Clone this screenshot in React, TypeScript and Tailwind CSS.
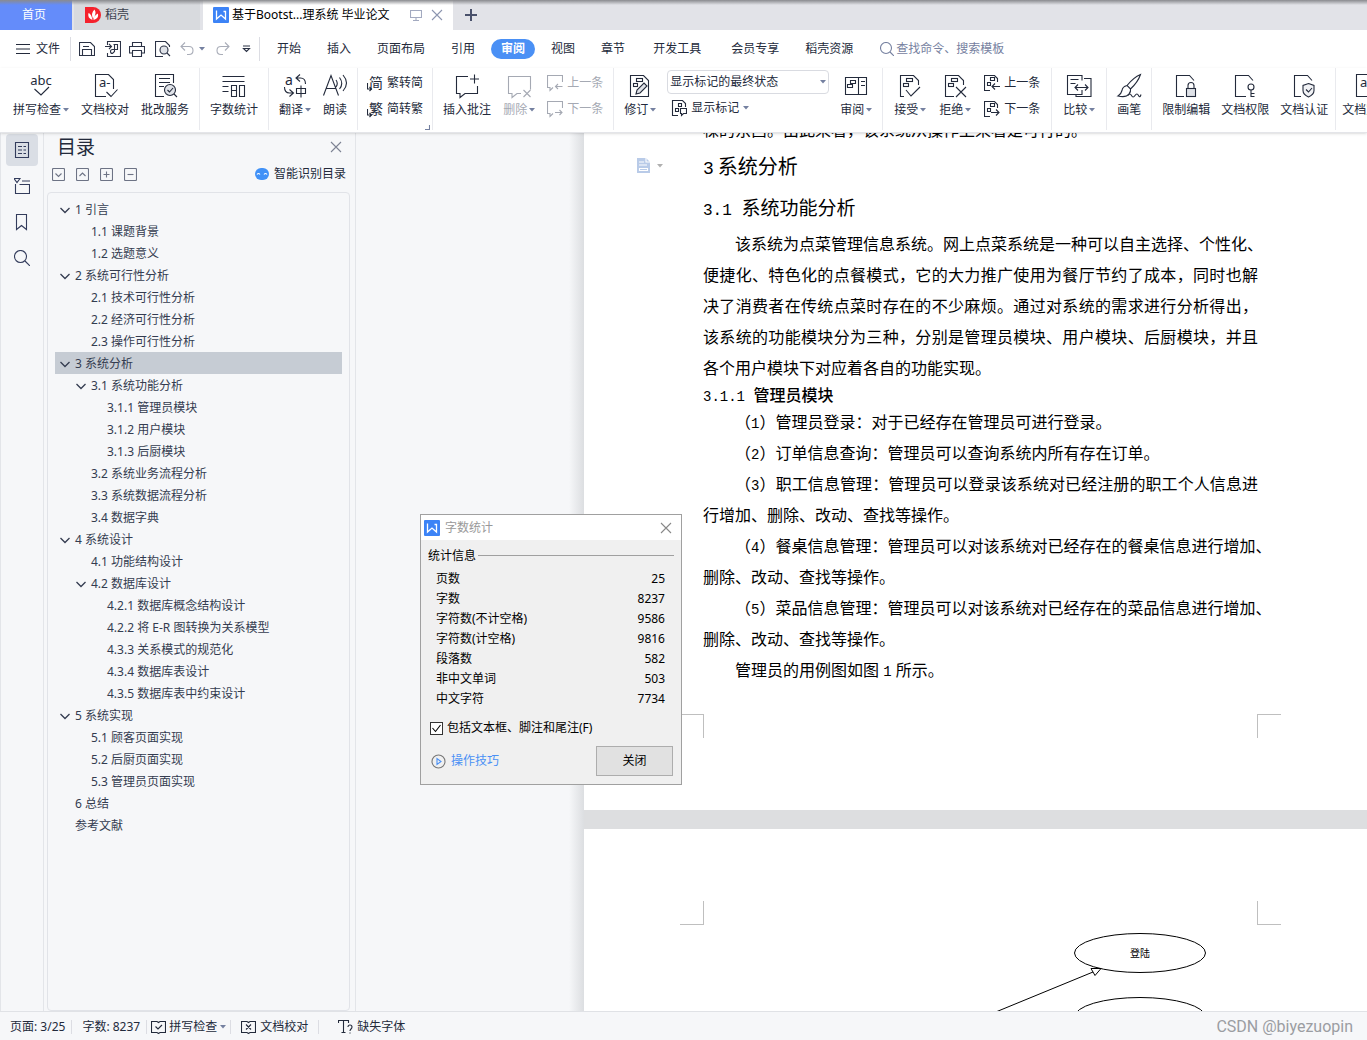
import type { ReactNode } from 'react'

type TocItem = { level: number; text: string; open?: boolean; active?: boolean }

const toc: TocItem[] = [
  { level: 0, text: '1 引言', open: true },
  { level: 1, text: '1.1 课题背景' },
  { level: 1, text: '1.2 选题意义' },
  { level: 0, text: '2 系统可行性分析', open: true },
  { level: 1, text: '2.1 技术可行性分析' },
  { level: 1, text: '2.2 经济可行性分析' },
  { level: 1, text: '2.3 操作可行性分析' },
  { level: 0, text: '3 系统分析', open: true, active: true },
  { level: 1, text: '3.1 系统功能分析', open: true },
  { level: 2, text: '3.1.1 管理员模块' },
  { level: 2, text: '3.1.2 用户模块' },
  { level: 2, text: '3.1.3 后厨模块' },
  { level: 1, text: '3.2 系统业务流程分析' },
  { level: 1, text: '3.3 系统数据流程分析' },
  { level: 1, text: '3.4 数据字典' },
  { level: 0, text: '4 系统设计', open: true },
  { level: 1, text: '4.1 功能结构设计' },
  { level: 1, text: '4.2 数据库设计', open: true },
  { level: 2, text: '4.2.1 数据库概念结构设计' },
  { level: 2, text: '4.2.2 将 E-R 图转换为关系模型' },
  { level: 2, text: '4.3.3 关系模式的规范化' },
  { level: 2, text: '4.3.4 数据库表设计' },
  { level: 2, text: '4.3.5 数据库表中约束设计' },
  { level: 0, text: '5 系统实现', open: true },
  { level: 1, text: '5.1 顾客页面实现' },
  { level: 1, text: '5.2 后厨页面实现' },
  { level: 1, text: '5.3 管理员页面实现' },
  { level: 0, text: '6 总结' },
  { level: 0, text: '参考文献' },
]

const tocIndent = ['pl-1', 'pl-5', 'pl-9']

const stats = [
  ['页数', '25'],
  ['字数', '8237'],
  ['字符数(不计空格)', '9586'],
  ['字符数(计空格)', '9816'],
  ['段落数', '582'],
  ['非中文单词', '503'],
  ['中文字符', '7734'],
]

function Svg({ w, h, children, className = '' }: { w: number; h: number; children: ReactNode; className?: string }) {
  return (
    <svg
      width={w}
      height={h}
      viewBox={`0 0 ${w} ${h}`}
      fill="none"
      stroke="currentColor"
      strokeWidth="1.1"
      className={`shrink-0 ${className}`}
      aria-hidden="true"
    >
      {children}
    </svg>
  )
}

function Caret({ className = 'text-[#7480a0]' }: { className?: string }) {
  return (
    <Svg w={6} h={4} className={className}>
      <path d="M0 0h6L3 3.5z" fill="currentColor" stroke="none" />
    </Svg>
  )
}

function CloseIcon({ className = '' }: { className?: string }) {
  return (
    <Svg w={12} h={12} className={className}>
      <path d="M1 1l10 10M11 1L1 11" />
    </Svg>
  )
}

function WpsLogo() {
  return (
    <Svg w={16} h={16}>
      <rect width="16" height="16" rx="1" fill="#3c83f6" stroke="none" />
      <path d="M3.5 3.5v8.5l4.5-4 4.5 4V4.5h-2" stroke="#fff" strokeWidth="1.3" />
    </Svg>
  )
}

/* small blocks drawn inside the revision icons */
function Blocks() {
  return (
    <>
      <rect x="10.5" y="6.5" width="6" height="3" />
      <rect x="7.5" y="11.5" width="5" height="3" />
    </>
  )
}

const icons = {
  spell: (
    <>
      <text x="14" y="13" textAnchor="middle" fontSize="13" fill="currentColor" stroke="none">abc</text>
      <path d="M7.5 17l6.500 6 8-8" />
    </>
  ),
  proof: (
    <>
      <path d="M15 24.5H4.5v-22h13l5 5V17" />
      <text x="8" y="15" fontSize="13" fill="currentColor" stroke="none">a-</text>
      <path d="M15.5 20l4.500 4.500 6.500-7" />
    </>
  ),
  service: (
    <>
      <path d="M13 24.5H4.5v-22h18V11M8 6.5h11M8 10.5h11M8 14.5h5" />
      <circle cx="19" cy="18" r="5.5" fill="#dfe2e8" />
      <path d="M16.5 18l2 2 3.500-4M23 22l3 3" />
    </>
  ),
  count: (
    <path d="M2.5 4.5h22M2.5 9.5h22M2.5 14.5h6M2.5 19.5h6M11.5 13.5h5v11h-5zM11.5 18.5h5M19.5 13.5h5v11h-5z" />
  ),
  translate: (
    <>
      <text x="4" y="13" fontSize="14" fill="currentColor" stroke="none">a</text>
      <path d="M19 2.5l-4 3.500 4 3.500M15 6h4.500q5 0 5 6M3.5 15q0 6 5 6h3.500M8.5 17.5l4 3.500-4 3.500" />
      <path d="M15.5 16.5h9v5h-9zM20 13.5v12" />
    </>
  ),
  read: (
    <path d="M2.5 23.5L10 3.5l7.500 20M5 16.5h10M15 8q2.500 3.500 0 7M18.5 5.5q4.500 6 0 11.500M22 3q7 8 0 16" />
  ),
  comment: <path d="M15 4.5H3.5v17H7v4l5-4h12.500V14M21.5 2.5v9M17 7h9" />,
  removeComment: <path d="M16 21.5h-4l-5 4v-4H3.5v-17h22v13M18.5 18l7 7M25.5 18l-7 7" />,
  revise: (
    <>
      <path d="M4.5 3.5h13l5 5v16h-18z" />
      <rect x="10.5" y="6.5" width="6" height="3" />
      <rect x="7.5" y="11.5" width="4" height="3" />
      <path d="M10 22l1-4 7-7 3 3-7 7z" fill="#dfe2e8" />
    </>
  ),
  review: (
    <>
      <path d="M3.5 5.5h21v17h-21zM16.5 5.5v17M19 9.5h4M19 13.5h4" />
      <path d="M8.5 8.5h5v3h-5zM5.5 12.5h5v3h-5z" />
    </>
  ),
  accept: (
    <>
      <path d="M8 24.5H4.5v-21h13l5 5V13M10 18l5 6 9-9" />
      <Blocks />
    </>
  ),
  reject: (
    <>
      <path d="M13 24.5H4.5v-21h13l5 5V13M15 15l10 10M25 15L15 25" />
      <Blocks />
    </>
  ),
  compare: (
    <path d="M17 8.500v-5H2.5v19h14.500V18M19 6.500h7v18H11v-2M5.5 7.5h8M5.5 11.5h5M10 15.500h13M13 12.500l-3 3 3 3M20 12.500l3 3-3 3" />
  ),
  pen: (
    <>
      <path d="M25.5 2.500q-7 3-13.500 11l3.500 3.500q7.500-7 10-14.500zM12 13.500q-4.500 1-5 5-1 4-4 5.500 8 2 11-2 2-2 1.500-5" />
      <path d="M13 23.5q2-3 3.500 0t3.500 0 3.500 0 2.500-1" />
    </>
  ),
  lock: (
    <>
      <path d="M12 24.5H4.5v-21h13l4.500 5" />
      <path d="M16 16v-2.500q0-3 3-3t3 3V16" />
      <rect x="14.5" y="16.5" width="9" height="8" fill="#dfe2e8" />
    </>
  ),
  key: (
    <>
      <path d="M15 24.5H4.5v-21h13l4.500 5" />
      <circle cx="20" cy="15" r="3" />
      <path d="M20 18v7M20 21.5h3.500M20 24.5h3.500" />
    </>
  ),
  shield: (
    <>
      <path d="M11 24.5H4.5v-21h13l4.500 5" />
      <path d="M18.5 11.5l5.500 2v5q0 4-5.500 6.500-5.500-2.500-5.500-6.500v-5z" fill="#f1f2f5" />
      <path d="M16 17.5l2.500 2.500 3.500-4" />
    </>
  ),
}

type ToolProps = { icon: keyof typeof icons; label: string; caret?: boolean; disabled?: boolean }

function Tool({ icon, label, caret, disabled }: ToolProps) {
  return (
    <button className="flex shrink-0 flex-col items-center gap-[2px] pt-1 disabled:text-[#a5a9b3]" disabled={disabled}>
      <Svg w={28} h={28} className="-mx-2">{icons[icon]}</Svg>
      <span className="flex items-center gap-[2px] leading-4">
        {label}
        {caret && <Caret />}
      </span>
    </button>
  )
}

function SmallTool({ icon, label, caret, disabled }: { icon: ReactNode; label: string; caret?: boolean; disabled?: boolean }) {
  return (
    <button className="flex h-[26px] items-center gap-1 disabled:text-[#a5a9b3]" disabled={disabled}>
      <Svg w={16} h={18}>{icon}</Svg>
      <span>{label}</span>
      {caret && <Caret />}
    </button>
  )
}

function Group({ children, className = 'gap-3 px-[10px]' }: { children: ReactNode; className?: string }) {
  return (
    <div className={`flex h-[62px] shrink-0 items-start border-r border-[#e9eaee] ${className}`}>
      {children}
    </div>
  )
}

function Stack({ children }: { children: ReactNode }) {
  return <div className="flex flex-col pt-[2px]">{children}</div>
}

function TabBar() {
  return (
    <div className="relative flex h-[30px] bg-[#e2e3e8]">
      <button className="mr-[2px] w-[72px] bg-[#648cfa] pr-1 text-white">首页</button>
      <button className="mr-[3px] flex w-[126px] items-center gap-1 bg-[#d8dade] pl-[11px] text-[#3c4250]">
        <Svg w={16} h={16}>
          <path d="M0 0h8a8 8 0 0 1 0 16H0z" fill="#f5222d" stroke="none" />
          <path d="M7.5 13Q2 11 3.500 6q3 1 4 7zM8 12Q5.500 6 9.500 2.500q2.500 4-1.500 9.500zM8.500 13q0-4.500 4.500-6.500 1 5-4.500 6.500z" fill="#fff" stroke="none" />
        </Svg>
        稻壳
      </button>
      <div className="flex w-[250px] items-center bg-white px-[10px] text-black">
        <WpsLogo />
        <span className="ml-[3px] flex-1 whitespace-nowrap">基于Bootst...理系统 毕业论文</span>
        <Svg w={12} h={12} className="mr-[9px] text-[#a3aac0]">
          <path d="M.5 1.5h11v7H.5zM6 8.5v3M3 11.5h6" />
        </Svg>
        <button aria-label="关闭标签"><CloseIcon className="text-[#8d96b0]" /></button>
      </div>
      <button aria-label="新建" className="px-3 text-[#49516b]">
        <Svg w={12} h={12}><path d="M6 0v12M0 6h12" strokeWidth="2" /></Svg>
      </button>
      <div className="absolute inset-x-0 top-0 h-[5px] bg-linear-to-b from-[#8a8b8f] to-transparent" />
    </div>
  )
}

function MenuBar() {
  const tab = 'px-[13px]'
  const wide = 'px-[15px]'
  return (
    <div className="flex h-[38px] items-center whitespace-nowrap">
      <button className="flex items-center gap-[6px] pl-4 pr-[10px]">
        <Svg w={14} h={10}><path d="M0 .5h14M0 5h14M0 9.5h14" /></Svg>
        文件
      </button>
      <div className="flex h-6 items-center border-x border-[#dcdde3] px-2 text-[#2b3245]">
        <button aria-label="保存">
          <Svg w={16} h={16}><path d="M.5 1.5h11l4 4v9H.5zM3.5 14V8.5h9V14M4 5.5h6" /></Svg>
        </button>
        <button aria-label="输出" className="ml-[10px]">
          <Svg w={16} h={16}><path d="M2.5 4V.5h13v15h-13V12M0 5.5h6M4 3l2.500 2.500L4 8M8.500 3.500h4v5h-5q-2 0-2 2t2 2l2-2v-7" /></Svg>
        </button>
        <button aria-label="打印" className="ml-2">
          <Svg w={16} h={16}><path d="M3.5 5V1.5h9V5M3.5 12H.5V5.5h15V12h-3M3.5 9.5h9v6h-9z" /></Svg>
        </button>
        <button aria-label="打印预览" className="ml-[10px]">
          <Svg w={16} h={16}>
            <path d="M8 15.5H.5V.5h10l4 4V6" />
            <circle cx="9" cy="9" r="4" fill="#dfe2e8" />
            <path d="M12 12l3 3" />
          </Svg>
        </button>
        <button aria-label="撤销" className="ml-[9px] flex items-center gap-1 text-[#a9adb8]">
          <Svg w={15} h={14}><path d="M5 .5l-4 4 4 4M1 4.5h8q4 0 4 4t-4 4H7" /></Svg>
          <Caret />
        </button>
        <button aria-label="恢复" className="ml-[10px] text-[#a9adb8]">
          <Svg w={15} h={14}><path d="M10 .5l4 4-4 4M14 4.5H6q-4 0-4 4t4 4h2" /></Svg>
        </button>
        <button aria-label="自定义" className="ml-3">
          <Svg w={9} h={8}><path d="M1 1h7M1.5 3.5l3 3 3-3z" /></Svg>
        </button>
      </div>
      <nav className="flex items-center pl-1">
        <button className={tab}>开始</button>
        <button className={tab}>插入</button>
        <button className={tab}>页面布局</button>
        <button className={tab}>引用</button>
        <button className="mx-[3px] h-5 rounded-full bg-[#4a90f5] px-[10px] font-bold text-white">审阅</button>
        <button className={tab}>视图</button>
        <button className={tab}>章节</button>
        <button className={wide}>开发工具</button>
        <button className={wide}>会员专享</button>
        <button className="px-[11px]">稻壳资源</button>
      </nav>
      <label className="ml-4 flex items-center gap-[2px] text-[#7681a0]">
        <Svg w={14} h={14}><circle cx="6" cy="6" r="5.5" /><path d="M10 10l4 4" /></Svg>
        <input
          aria-label="查找命令"
          placeholder="查找命令、搜索模板"
          className="w-32 bg-transparent outline-none placeholder:text-[#7681a0]"
        />
      </label>
    </div>
  )
}

const prevIcon = <path d="M6 16.5H.5v-15h10l3 3V8M6.5 3.5h4v3h-4zM3.5 8.5h3v3h-3zM16 12.5H8M11 9.5l-3 3 3 3" />
const nextIcon = <path d="M6 16.5H.5v-15h10l3 3V8M6.5 3.5h4v3h-4zM3.5 8.5h3v3h-3zM7 12.5h8M12 9.5l3 3-3 3" />

function Ribbon() {
  return (
    <div className="relative z-10 flex h-[65px] overflow-hidden border-b border-[#e4e5e9] bg-white pl-[3px] whitespace-nowrap shadow">
      <Group>
        <Tool icon="spell" label="拼写检查" caret />
        <Tool icon="proof" label="文档校对" />
        <Tool icon="service" label="批改服务" />
      </Group>
      <Group>
        <Tool icon="count" label="字数统计" />
      </Group>
      <Group>
        <Tool icon="translate" label="翻译" caret />
        <Tool icon="read" label="朗读" />
      </Group>
      <Group className="px-[9px]">
        <Stack>
          <SmallTool
            label="繁转简"
            icon={
              <>
                <text x="2" y="14" fontSize="14" fill="currentColor" stroke="none">简</text>
                <path d="M.5 9v6h4M2.5 13l2 2-2 2" />
              </>
            }
          />
          <SmallTool
            label="简转繁"
            icon={
              <>
                <text x="2" y="14" fontSize="14" fill="currentColor" stroke="none">繁</text>
                <path d="M.5 9v6h4M2.5 13l2 2-2 2" />
              </>
            }
          />
        </Stack>
        <Svg w={5} h={5} className="-mr-[7px] ml-[2px] self-end text-[#7480a0]"><path d="M4.5 0v4.5H0" /></Svg>
      </Group>
      <Group>
        <Tool icon="comment" label="插入批注" />
        <Tool icon="removeComment" label="删除" caret disabled />
        <Stack>
          <SmallTool disabled label="上一条" icon={<path d="M6 13.5l-3 3v-3H.5v-12h15V8M15.5 12.5h-7M11 10l-2.500 2.500L11 15" />} />
          <SmallTool disabled label="下一条" icon={<path d="M6 13.5l-3 3v-3H.5v-12h15V8M8 12.5h7M12.5 10l2.500 2.500-2.500 2.500" />} />
        </Stack>
      </Group>
      <Group className="gap-[11px] px-[10px]">
        <Tool icon="revise" label="修订" caret />
        <div className="flex flex-col pt-[2px]">
          <div className="relative flex items-center">
            <select
              aria-label="标记显示方式"
              className="h-6 w-[162px] appearance-none rounded-sm border border-[#d9dbe1] bg-white pl-[2px]"
            >
              <option>显示标记的最终状态</option>
            </select>
            <span className="pointer-events-none absolute right-[3px]"><Caret /></span>
          </div>
          <div className="flex pl-1 pt-px">
            <SmallTool
              caret
              label="显示标记"
              icon={<path d="M7 16.5H1.5v-15h10l3 3V8M7.5 4.5h3v3h-3zM4.5 9.5h3v3h-3zM9.5 9.5h6v5h-3l-2 2v-2h-1z" />}
            />
          </div>
        </div>
        <Tool icon="review" label="审阅" caret />
      </Group>
      <Group className="gap-[13px] px-[11px]">
        <Tool icon="accept" label="接受" caret />
        <Tool icon="reject" label="拒绝" caret />
        <Stack>
          <SmallTool label="上一条" icon={prevIcon} />
          <SmallTool label="下一条" icon={nextIcon} />
        </Stack>
      </Group>
      <Group className="px-[11px]">
        <Tool icon="compare" label="比较" caret />
      </Group>
      <Group>
        <Tool icon="pen" label="画笔" />
      </Group>
      <Group className="gap-[11px] pl-[10px] pr-[7px]">
        <Tool icon="lock" label="限制编辑" />
        <Tool icon="key" label="文档权限" />
        <Tool icon="shield" label="文档认证" />
      </Group>
      <div className="pl-[6px]">
        <Tool icon="proof" label="文档定稿" />
      </div>
    </div>
  )
}

function Rail() {
  const btn = 'flex size-8 items-center justify-center rounded-sm'
  return (
    <div className="flex w-11 shrink-0 flex-col items-center gap-1 border-x border-[#e3e5e9] pt-px text-[#333c5c]">
      <button aria-label="目录" className={`${btn} bg-[#dadee5]`}>
        <Svg w={16} h={16}><path d="M1.500.5h13v15h-13zM4 4.5h4M4 8h4M4 11.5h4M9.5 4.5h2.500M9.5 8h2.500M9.5 11.5h2.500" /></Svg>
      </button>
      <button aria-label="章节" className={btn}>
        <Svg w={16} h={16}><path d="M0 .5h6L3 4.5zM8 3h8M1.5 6v9.500h14v-9h-10" /></Svg>
      </button>
      <button aria-label="书签" className={btn}>
        <Svg w={16} h={18}><path d="M2.5 1.5h10v15l-5-4-5 4z" /></Svg>
      </button>
      <button aria-label="查找" className={btn}>
        <Svg w={16} h={16}><circle cx="6.5" cy="6.5" r="6" /><path d="M11 11l5 5" /></Svg>
      </button>
    </div>
  )
}

function Square({ d, label }: { d: string; label: string }) {
  return (
    <button aria-label={label}>
      <Svg w={13} h={13} className="text-[#6d7385]">
        <rect x=".5" y=".5" width="12" height="12" rx="1" />
        <path d={d} />
      </Svg>
    </button>
  )
}

function TocPanel() {
  return (
    <aside className="flex w-[312px] shrink-0 flex-col border-r border-[#e3e5e9]">
      <div className="flex h-7 items-center justify-between pl-[13px] pr-[13px]">
        <h2 className="text-[19px]">目录</h2>
        <button aria-label="关闭目录"><CloseIcon className="text-[#7d8394]" /></button>
      </div>
      <div className="flex h-[26px] items-center gap-[11px] pl-2 pr-[9px]">
        <Square label="展开" d="M3.5 5.5l3 3 3-3" />
        <Square label="收缩" d="M3.5 8l3-3 3 3" />
        <Square label="展开级别" d="M6.5 3.5v6M3.5 6.5h6" />
        <Square label="收缩级别" d="M3.5 6.5h6" />
        <button className="ml-auto flex items-center gap-1">
          <Svg w={15} h={12}>
            <rect width="14" height="12" rx="6" fill="#4191f7" stroke="none" />
            <path d="M2 6.5q1.500-2 3 0M9 6.5q1.500-2 3 0" stroke="#fff" />
          </Svg>
          智能识别目录
        </button>
      </div>
      <ul className="ml-[3px] mr-[5px] mt-[5px] flex-1 rounded-sm border border-[#e1e3e8] px-[7px] pt-[5px] text-[#343c50]">
        {toc.map((item) => (
          <li key={item.text}>
            <button
              className={`flex h-[22px] w-full items-center pt-[2px] ${tocIndent[item.level]} ${item.active ? 'bg-[#c6ccd4]' : ''}`}
            >
              <span className="w-4">
                {item.open && <Svg w={12} h={8}><path d="M1.5 2l4.500 4.500L10.5 2" strokeWidth="1.3" /></Svg>}
              </span>
              {item.text}
            </button>
          </li>
        ))}
      </ul>
    </aside>
  )
}

/* One typeset line: full lines are spread to the text width */
function Line({ children, full, indent }: { children: ReactNode; full?: boolean; indent?: boolean }) {
  return (
    <span className={`block whitespace-nowrap ${full ? '[text-align-last:justify]' : ''} ${indent ? 'pl-8' : ''}`}>
      {children}
    </span>
  )
}

function Num({ children }: { children: ReactNode }) {
  return <span className="font-['Liberation_Mono',monospace] text-[14px] leading-none">{children}</span>
}

function Corners({ top }: { top?: boolean }) {
  const edge = top ? 'border-b' : 'border-t'
  return (
    <div className="-mx-[23px] flex justify-between">
      <div className={`size-6 border-r border-[#bfbfbf] ${edge}`} />
      <div className={`size-6 border-l border-[#bfbfbf] ${edge}`} />
    </div>
  )
}

function Document() {
  return (
    <main className="flex min-w-0 flex-1 overflow-hidden">
      <div className="w-[213px] shrink-0" />
      <div className="w-[15px] shrink-0 bg-linear-to-r from-[#f6f7f9] to-[#dcdee1]" />
      <div className="flex w-[793px] shrink-0 flex-col gap-[19px] bg-[#dddee0] text-[16px] leading-[31px] text-black">
        <article className="relative bg-white px-[119px] pb-[72px]">
          <div className="-mt-[18px]"><Line>棵的东西。由此来看，该系统从操作上来看是可行的。</Line></div>
          <button aria-label="段落布局" className="absolute left-[53px] top-[25px] flex items-center gap-[7px]">
            <Svg w={13} h={15}>
              <path d="M0 0h9l4 4v11H0z" fill="#b9cbe8" stroke="none" />
              <path d="M2 4h5M2 7h8M2.5 10.5h8v2h-8zM9 0v4h4" stroke="#fff" />
            </Svg>
            <Caret className="text-[#b0b0b0]" />
          </button>
          <h1 className="text-[20px] leading-[42px]">
            <span className="mr-1 font-['Liberation_Mono',monospace] text-[18px] leading-none">3</span>系统分析
          </h1>
          <h2 className="text-[19px] leading-[41px]">
            <span className="whitespace-pre font-['Liberation_Mono',monospace] text-[16px] leading-none">3.1 </span>系统功能分析
          </h2>
          <p>
            <Line indent>该系统为点菜管理信息系统。网上点菜系统是一种可以自主选择、个性化、</Line>
            <Line full>便捷化、特色化的点餐模式，它的大力推广使用为餐厅节约了成本，同时也解</Line>
            <Line full>决了消费者在传统点菜时存在的不少麻烦。通过对系统的需求进行分析得出，</Line>
            <Line full>该系统的功能模块分为三种，分别是管理员模块、用户模块、后厨模块，并且</Line>
            <Line>各个用户模块下对应着各自的功能实现。</Line>
          </p>
          <h3 className="leading-[23px]">
            <span className="whitespace-pre font-['Liberation_Mono',monospace] text-[14px] leading-none">3.1.1 </span>
            <span className="font-medium">管理员模块</span>
          </h3>
          <p><Line indent>（<Num>1</Num>）管理员登录：对于已经存在管理员可进行登录。</Line></p>
          <p><Line indent>（<Num>2</Num>）订单信息查询：管理员可以查询系统内所有存在订单。</Line></p>
          <p>
            <Line indent full>（<Num>3</Num>）职工信息管理：管理员可以登录该系统对已经注册的职工个人信息进</Line>
            <Line>行增加、删除、改动、查找等操作。</Line>
          </p>
          <p>
            <Line indent>（<Num>4</Num>）餐桌信息管理：管理员可以对该系统对已经存在的餐桌信息进行增加、</Line>
            <Line>删除、改动、查找等操作。</Line>
          </p>
          <p>
            <Line indent>（<Num>5</Num>）菜品信息管理：管理员可以对该系统对已经存在的菜品信息进行增加、</Line>
            <Line>删除、改动、查找等操作。</Line>
          </p>
          <p className="mb-7"><Line indent>管理员的用例图如图 <Num>1</Num> 所示。</Line></p>
          <Corners />
        </article>
        <article className="flex-1 bg-white px-[119px] pt-[72px]">
          <Corners top />
          <svg width="556" height="160" viewBox="0 0 556 160" fill="none" stroke="#000" className="block">
            <ellipse cx="437" cy="28" rx="65.5" ry="19.5" />
            <text x="437" y="32" textAnchor="middle" fontSize="10" fill="#000" stroke="none">登陆</text>
            <ellipse cx="437" cy="92" rx="65.5" ry="19.5" />
            <path d="M283 91L390 47M398 43.500l-10 0 4 7z" />
          </svg>
        </article>
      </div>
    </main>
  )
}

function WordCountDialog() {
  return (
    <section
      role="dialog"
      aria-labelledby="count-title"
      className="absolute left-[420px] top-[381px] z-20 w-[262px] border border-[#a0a0a0] bg-[#f0f0f0] pb-2 text-black"
    >
      <header className="flex h-[25px] items-center bg-white pl-[3px] pr-[9px] text-[#999]">
        <WpsLogo />
        <h2 id="count-title" className="ml-[5px] flex-1">字数统计</h2>
        <button aria-label="关闭窗口"><CloseIcon className="text-[#888]" /></button>
      </header>
      <div className="flex h-[29px] items-center gap-[2px] px-[7px] pt-[2px]">
        <span>统计信息</span>
        <span className="flex-1 border-t border-[#a0a0a0]" />
      </div>
      <table className="w-full">
        <tbody>
          {stats.map(([name, value]) => (
            <tr key={name} className="h-5">
              <th scope="row" className="pl-[15px] text-left font-normal">{name}</th>
              <td className="pr-4 text-right">{value}</td>
            </tr>
          ))}
        </tbody>
      </table>
      <label className="mt-[9px] flex h-5 items-center gap-1 pl-[9px]">
        <span className="relative flex">
          <input type="checkbox" defaultChecked className="peer size-[13px] appearance-none border border-[#333] bg-white" />
          <Svg w={13} h={13} className="pointer-events-none absolute hidden peer-checked:block">
            <path d="M2.5 6l3 3.500L10.5 3" />
          </Svg>
        </span>
        包括文本框、脚注和尾注(F)
      </label>
      <div className="mt-2 flex items-center justify-between pl-[10px] pr-2">
        <a href="#tips" className="flex items-center gap-[5px] text-[#4a90f5]">
          <Svg w={15} h={15}>
            <circle cx="7.5" cy="7.5" r="6.5" stroke="#777" />
            <path d="M6 4.5v6l4-3z" />
          </Svg>
          操作技巧
        </a>
        <button className="h-[30px] w-[77px] border border-[#adadad] bg-[#e1e1e1]">关闭</button>
      </div>
    </section>
  )
}

function StatusBar() {
  return (
    <footer className="flex h-[29px] shrink-0 items-center border-t border-[#e0e2e6] pt-px whitespace-nowrap">
      <span className="border-r border-[#dcdde3] pl-[10px] pr-[6px] leading-[14px]">页面: 3/25</span>
      <span className="border-r border-[#dcdde3] pl-[10px] pr-[6px] leading-[14px]">字数: 8237</span>
      <button className="flex items-center gap-[3px] border-r border-[#dcdde3] px-1 leading-[14px]">
        <Svg w={15} h={14}><path d="M6 1.5H.5v11H6l1.500 1 1.500-1h5.500v-11H9l-1.500 1zM4.5 6.5l2.500 2.500L11 5" /></Svg>
        拼写检查
        <Caret />
      </button>
      <button className="flex items-center gap-1 border-r border-[#dcdde3] pl-[10px] pr-[10px] leading-[14px]">
        <Svg w={15} h={14}><path d="M6 1.5H.5v11H6l1.500 1 1.500-1h5.500v-11H9l-1.500 1zM5 4.5l5 5M10 4.5l-5 5" /></Svg>
        文档校对
      </button>
      <button className="flex items-center gap-1 pl-[19px]">
        <Svg w={15} h={14}>
          <path d="M.5 3V.5h10V3M5.500.5v12M3.5 12.5h4M10 7q0-2 2-2t2 2q0 1-1 2t-1 2M12 12.5v1" />
        </Svg>
        缺失字体
      </button>
      <span className="ml-auto pr-[14px] font-['Roboto',sans-serif] text-[16px] text-[#9b9da2]">CSDN @biyezuopin</span>
    </footer>
  )
}

export default function App() {
  return (
    <div className="flex h-screen flex-col overflow-hidden bg-[#f6f7f9] font-['Noto_Sans','Noto_Sans_CJK_SC',sans-serif] text-[12px] leading-4 text-[#232a3b]">
      <header className="shrink-0 bg-white">
        <TabBar />
        <MenuBar />
        <Ribbon />
      </header>
      <div className="relative flex min-h-0 flex-1">
        <Rail />
        <TocPanel />
        <Document />
        <WordCountDialog />
      </div>
      <StatusBar />
    </div>
  )
}
